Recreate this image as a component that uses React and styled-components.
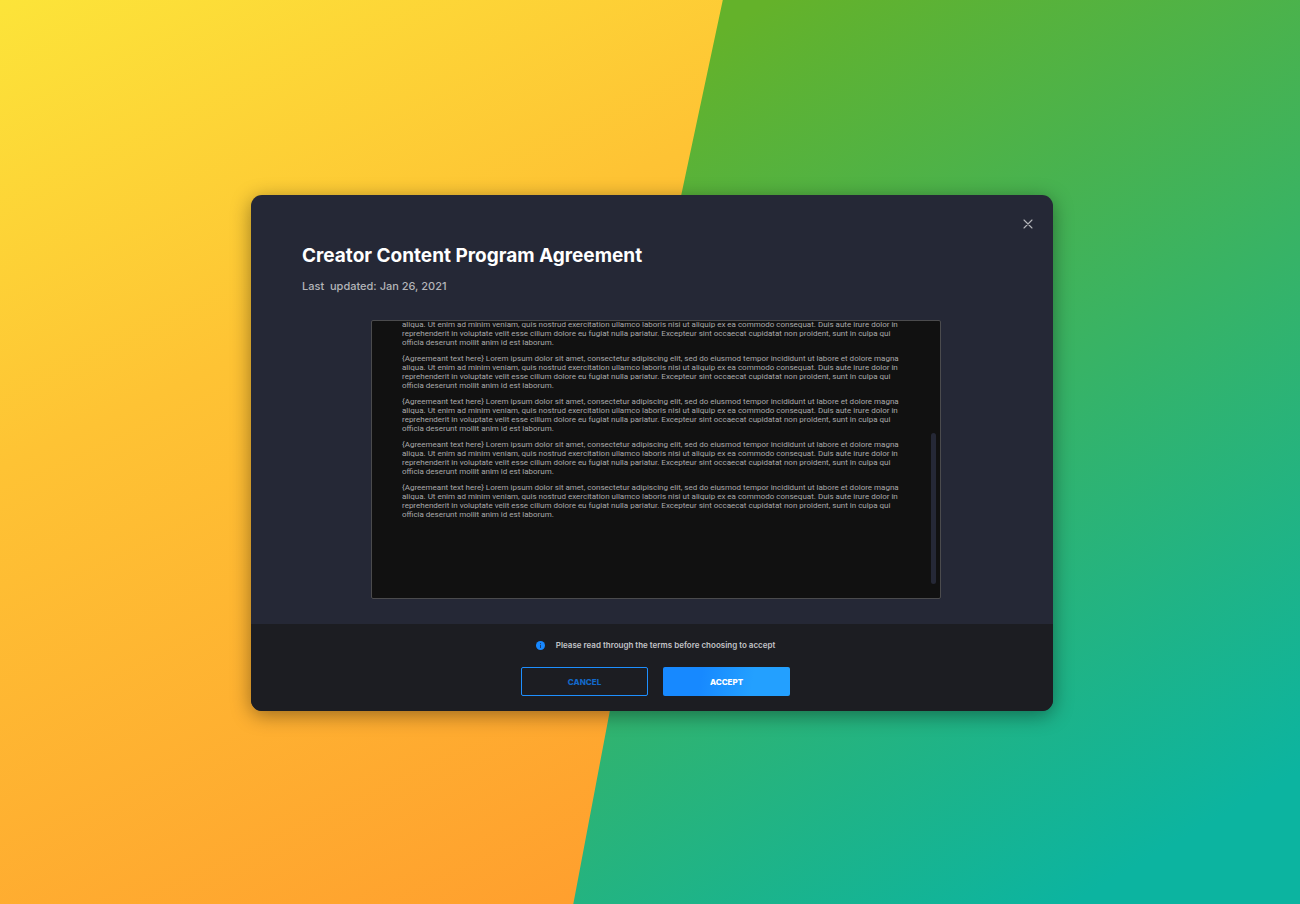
import React, { useLayoutEffect, useRef } from "react";
import styled, { createGlobalStyle } from "styled-components";

const AGREEMENT =
    "{Agreemeant text here} Lorem ipsum dolor sit amet, consectetur adipiscing elit, sed do eiusmod tempor incididunt ut labore et dolore magna aliqua. Ut enim ad minim veniam, quis nostrud exercitation ullamco laboris nisi ut aliquip ex ea commodo consequat. Duis aute irure dolor in reprehenderit in voluptate velit esse cillum dolore eu fugiat nulla pariatur. Excepteur sint occaecat cupidatat non proident, sunt in culpa qui officia deserunt mollit anim id est laborum.";

const paragraphs = Array(5).fill(AGREEMENT);

function Terms() {
    const scroller = useRef(null);

    // open on the end of the agreement
    useLayoutEffect(() => {
        scroller.current.scrollTop = scroller.current.scrollHeight;
    }, []);

    return (
        <TermsBox>
            <TermsScroll ref={scroller} tabIndex={0} role="region" aria-label="Agreement">
                {paragraphs.map((text, i) => (
                    <Paragraph key={i}>{text}</Paragraph>
                ))}
            </TermsScroll>
            <ScrollThumb />
        </TermsBox>
    );
}

const App = () => {
    return (
        <>
            <GlobalStyle />
            <Page>
                <Modal role="dialog" aria-labelledby="agreement-title">
                    <Body>
                        <CloseButton type="button" aria-label="Close">
                            <svg width="10" height="10" viewBox="0 0 10 10" fill="none" stroke="#b4b5b9">
                                <path d="M1 1L9 9M9 1L1 9" strokeWidth="1.1" strokeLinecap="round" />
                            </svg>
                        </CloseButton>
                        <Title id="agreement-title">Creator Content Program Agreement</Title>
                        <Updated>Last &nbsp;updated: Jan 26, 2021</Updated>
                        <Terms />
                    </Body>
                    <Footer>
                        <Notice>
                            <svg width="9" height="9" viewBox="0 0 9 9" aria-hidden="true">
                                <circle cx="4.5" cy="4.5" r="4.5" fill="#1788ff" />
                                <path d="M4.5 2v.9M4.5 3.8v3.2" stroke="#1c3f73" strokeWidth="1" />
                            </svg>
                            Please read through the terms before choosing to accept
                        </Notice>
                        <Actions>
                            <Button type="button">CANCEL</Button>
                            <Button type="button" $primary>ACCEPT</Button>
                        </Actions>
                    </Footer>
                </Modal>
            </Page>
        </>
    );
};

const GlobalStyle = createGlobalStyle`
    * {
        box-sizing: border-box;
    }
    body {
        margin: 0;
        font-family: Inter, "Liberation Sans", sans-serif;
    }
    h1, p {
        margin: 0;
    }
`

const Page = styled.main`
    position: relative;
    min-height: 100vh;
    padding: 2px 0 0 4px;
    display: flex;
    align-items: center;
    justify-content: center;
    background: linear-gradient(155deg, #fce439 0%, #fec334 31%, #ff9f2e 78%);

    &::before {
        content: "";
        position: absolute;
        inset: 0;
        background: linear-gradient(150deg, #64b22a 27%, #0cb4a0 92%);
        clip-path: polygon(55.6% 0, 100% 0, 100% 100%, 44.1% 100%, 46.9% 78.7%, 52.4% 21.6%);
    }
`

const Modal = styled.section`
    position: relative;
    width: 100%;
    max-width: 802px;
    border-radius: 11px;
    overflow: hidden;
    background: #252836;
    box-shadow: 0 4px 20px rgba(0, 0, 0, 0.4);
`

const Body = styled.div`
    padding: 20px 16px 25px 51px;
    display: flex;
    flex-direction: column;
`

const CloseButton = styled.button`
    align-self: flex-end;
    width: 18px;
    height: 18px;
    padding: 0;
    display: flex;
    align-items: center;
    justify-content: center;
    border: 0;
    background: none;
    cursor: pointer;
`

const Title = styled.h1`
    margin-top: 11px;
    font-size: 19px;
    line-height: 24px;
    font-weight: 700;
    color: #fff;
`

const Updated = styled.p`
    margin-top: 10px;
    font-size: 11px;
    line-height: 16px;
    font-weight: 500;
    color: #b4b5b9;
`

const TermsBox = styled.div`
    position: relative;
    margin: 26px 96px 0 69px;
    border: 1px solid #4b4b4d;
    border-radius: 2px;
    overflow: hidden;
    background: #111;
`

const TermsScroll = styled.div`
    height: 277px;
    padding: 30px 30px 79px;
    display: flex;
    flex-direction: column;
    gap: 7px;
    overflow-y: auto;
    scrollbar-width: none;
    outline: none;
`

const Paragraph = styled.p`
    font-family: Roboto, "Liberation Sans", sans-serif;
    font-size: 8px;
    line-height: 9px;
    color: #a9a9ab;
`

const ScrollThumb = styled.div`
    position: absolute;
    right: 4px;
    bottom: 14px;
    width: 5px;
    height: 151px;
    border-radius: 3px;
    background: #252836;
`

const Footer = styled.footer`
    padding: 15px 16px 15px 23px;
    display: flex;
    flex-direction: column;
    align-items: center;
    gap: 16px;
    background: #1c1d22;
`

const Notice = styled.p`
    display: flex;
    align-items: center;
    gap: 11px;
    font-size: 8px;
    line-height: 12px;
    font-weight: 600;
    color: #c3c4c8;
`

const Actions = styled.div`
    display: flex;
    gap: 15px;
`

const Button = styled.button`
    width: 127px;
    height: 29px;
    border: 1px solid ${(props) => (props.$primary ? "transparent" : "#1e8fff")};
    border-radius: 2px;
    background: ${(props) =>
        props.$primary ? "linear-gradient(100deg, #1789ff 30%, #23a0ff 70%) border-box" : "none"};
    color: ${(props) => (props.$primary ? "#fff" : "#1368c8")};
    font-family: inherit;
    font-size: 8px;
    font-weight: 800;
    cursor: pointer;
`

export default App;
